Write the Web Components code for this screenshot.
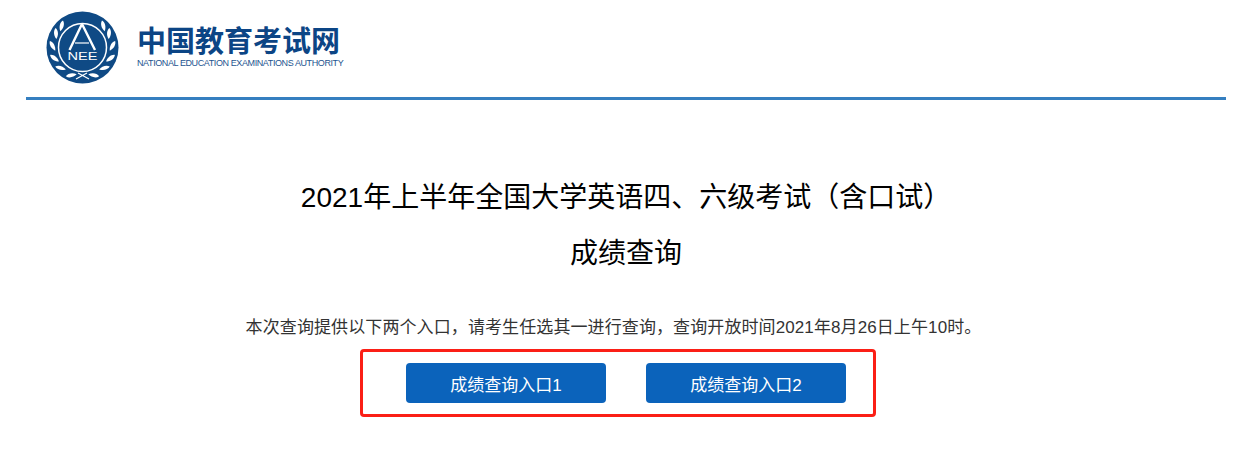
<!DOCTYPE html>
<html lang="zh">
<head>
<meta charset="utf-8">
<title>成绩查询</title>
<style>
  html, body { margin: 0; background: #fff; }
  body { font-family: "Liberation Sans", "Noto Sans CJK SC", sans-serif; }
</style>
</head>
<body>
<cet-page>
  <cet-header></cet-header>
  <cet-notice>
    <span slot="title">2021年上半年全国大学英语四、六级考试（含口试）</span>
    <span slot="subtitle">成绩查询</span>
    本次查询提供以下两个入口，请考生任选其一进行查询，查询开放时间2021年8月26日上午10时。
    <cet-button slot="links">成绩查询入口1</cet-button>
    <cet-button slot="links">成绩查询入口2</cet-button>
  </cet-notice>
</cet-page>

<script>
class CetPage extends HTMLElement {
  constructor() {
    super();
    this.attachShadow({ mode: 'open' }).innerHTML = `
      <style>
        :host { display: block; width: 1200px; margin-left: 26px; }
      </style>
      <slot></slot>`;
  }
}

// wreath leaves, angle clockwise from top on the left branch, mirrored for the right one
const leaves = [-44, -62, -87, -111, -133, -158];
const leaf = 'M0 -5.5C2.6 -3 2.6 2 0 5.5C-2.6 2 -2.6 -3 0 -5.5Z';
const wreath = leaves.map(a =>
  `<g transform="rotate(${a} 36.5 36.5) translate(36.5 6.5) rotate(58)"><path d="${leaf}"/></g>` +
  `<g transform="rotate(${-a} 36.5 36.5) translate(36.5 6.5) rotate(-58)"><path d="${leaf}"/></g>`
).join('');

class CetHeader extends HTMLElement {
  constructor() {
    super();
    this.attachShadow({ mode: 'open' }).innerHTML = `
      <style>
        :host {
          display: flex;
          align-items: center;
          gap: 18px;
          height: 97px;
          padding: 0 0 0 20px;
          border-bottom: 3px solid #357fc0;
        }
        svg { display: block; flex: none; margin-top: -3px; }
        .brand { display: flex; flex-direction: column; margin-top: -6px; color: #0c4585; }
        .cn {
          font: 700 29px/34px "Noto Sans CJK SC", sans-serif;
          white-space: nowrap;
        }
        .en {
          font: 9px/12px "Liberation Sans", sans-serif;
          letter-spacing: -0.4px;
          color: #1d5590;
          white-space: nowrap;
          margin-top: 1px;
        }
      </style>
      <svg width="73" height="73" viewBox="0 0 73 73" aria-hidden="true">
        <circle cx="36.5" cy="36.5" r="36" fill="#0f4a85"/>
        <circle cx="36.5" cy="36.5" r="24" fill="none" stroke="#fff" stroke-width="1.5"/>
        <g fill="#fff">${wreath}</g>
        <path d="M30 68 L41 62 M43 68 L32 62" stroke="#fff" stroke-width="1.2"/>
        <path d="M36 13 L23.5 39 M36 13 L49 39" fill="none" stroke="#fff" stroke-width="2.4"/>
        <path d="M29 32H43" stroke="#fff" stroke-width="1.2"/>
        <text x="36.5" y="49" text-anchor="middle" fill="#fff" font-family="Liberation Sans, sans-serif" font-size="11.5" textLength="30" lengthAdjust="spacingAndGlyphs">NEE</text>
      </svg>
      <div class="brand">
        <div class="cn">中国教育考试网</div>
        <div class="en">NATIONAL EDUCATION EXAMINATIONS AUTHORITY</div>
      </div>`;
  }
}

class CetNotice extends HTMLElement {
  constructor() {
    super();
    this.attachShadow({ mode: 'open' }).innerHTML = `
      <style>
        :host { display: flex; flex-direction: column; align-items: center; text-align: center; padding-top: 70px; }
        .title {
          font: 28px/56px "Liberation Sans", "Noto Sans CJK SC", sans-serif;
          color: #000;
        }
        .desc {
          font: 17px/24px "Liberation Sans", "Noto Sans CJK SC", sans-serif;
          letter-spacing: 0.1px;
          color: #333;
          margin: 34px 25px 0 0;
        }
        .links {
          display: flex;
          gap: 40px;
          justify-content: center;
          box-sizing: border-box;
          width: 516px;
          height: 68px;
          margin: 9px 16px 0 0;
          padding: 11px 0 0 16px;
          border: 3px solid #fb1f16;
          border-radius: 4px;
        }
      </style>
      <div class="title"><slot name="title"></slot></div>
      <div class="title"><slot name="subtitle"></slot></div>
      <div class="desc"><slot></slot></div>
      <div class="links"><slot name="links"></slot></div>`;
  }
}

class CetButton extends HTMLElement {
  constructor() {
    super();
    this.attachShadow({ mode: 'open' }).innerHTML = `
      <style>
        :host {
          display: flex;
          align-items: center;
          justify-content: center;
          width: 200px;
          height: 40px;
          border-radius: 4px;
          background: #0b63bb;
          color: #fff;
          font: 17px "Liberation Sans", "Noto Sans CJK SC", sans-serif;
        }
      </style>
      <slot></slot>`;
  }
}

customElements.define('cet-page', CetPage);
customElements.define('cet-header', CetHeader);
customElements.define('cet-notice', CetNotice);
customElements.define('cet-button', CetButton);
</script>
</body>
</html>
